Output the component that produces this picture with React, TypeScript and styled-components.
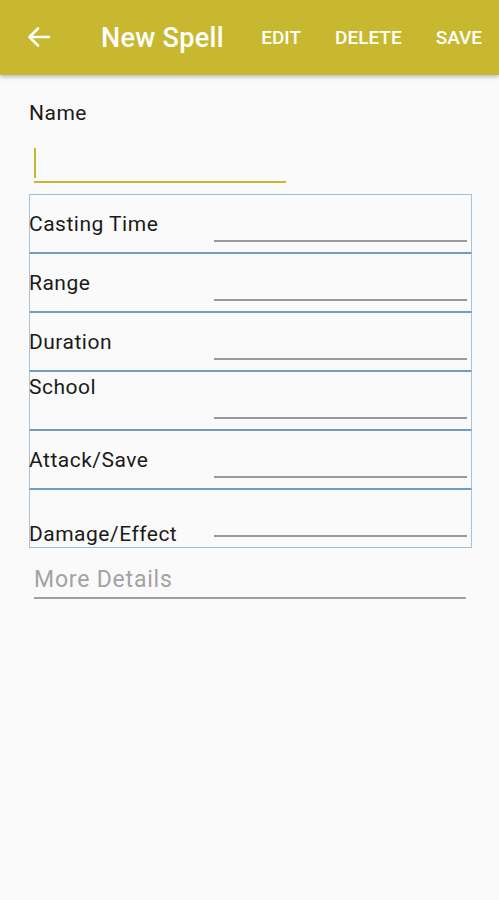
import React from "react";
import styled, { createGlobalStyle } from "styled-components";

const Global = createGlobalStyle`
  html, body { margin: 0; padding: 0; background: #fafafa; }
  body { font-family: Roboto, "Noto Sans", "Liberation Sans", sans-serif; }
  * { box-sizing: border-box; }
`;

const Screen = styled.div`
  width: 499px;
  min-height: 900px;
  background: #fafafa;
`;

const AppBar = styled.header`
  height: 75px;
  background: #c8b82f;
  display: flex;
  align-items: center;
  padding: 0 17px 0 27px;
  box-shadow: 0 2px 4px rgba(0, 0, 0, 0.25);
  color: #fff;
  position: relative;
`;

const BackButton = styled.button`
  border: 0;
  background: transparent;
  padding: 0;
  width: 24px;
  height: 24px;
  display: flex;
  align-items: center;
  justify-content: center;
  color: #fff;
  margin-top: -1px;
`;

const Title = styled.h1`
  margin: 0 0 0 50px;
  font-size: 27px;
  font-weight: 500;
  letter-spacing: 0.3px;
`;

const Actions = styled.nav`
  margin-left: auto;
  display: flex;
  gap: 34px;
`;

const Action = styled.span`
  font-size: 19px;
  font-weight: 500;
  letter-spacing: 0;
`;

const Body = styled.main`
  padding: 0 28px 0 29px;
`;

const NameLabel = styled.div`
  margin-top: 26px;
  font-size: 21px;
  line-height: 24px;
  color: #1c1c1c;
  letter-spacing: 0.5px;
`;

const NameInput = styled.div`
  margin-left: 5px;
  width: 252px;
  height: 58px;
  border-bottom: 2px solid #c8b82f;
  display: flex;
  align-items: flex-end;
  padding-bottom: 3px;
`;

const Caret = styled.span`
  width: 2px;
  height: 30px;
  background: #c8b82f;
`;

const Grid = styled.section`
  margin-top: 11px;
  width: 443px;
  display: flex;
  flex-direction: column;
`;

const Row = styled.div`
  height: 59px;
  display: flex;
  border: 1px solid #a8c5da;
  border-top-color: #6f9dc1;
  border-bottom-color: #6f9dc1;
  &:first-child { border-top-color: #9dbdd4; }
  &:last-child { border-bottom-color: #9dbdd4; }
`;

const RowLabel = styled.div<{ $align: "center" | "flex-start" | "flex-end" }>`
  width: 185px;
  margin-left: -1px;
  align-self: ${(p) => p.$align};
  font-size: 21px;
  line-height: 24px;
  color: #1a1a1a;
  letter-spacing: 0.5px;
  white-space: nowrap;
  padding-top: ${(p) => (p.$align === "flex-start" ? "3px" : "0")};
  padding-bottom: ${(p) => (p.$align === "flex-end" ? "1px" : "0")};
`;

const RowInput = styled.div`
  flex: 1;
  margin-right: 4px;
  margin-bottom: 10px;
  border-bottom: 2px solid #9a9a9a;
`;

const Details = styled.div`
  margin: 18px 5px 0 5px;
  width: 432px;
  padding-bottom: 3px;
  border-bottom: 2px solid #a0a0a0;
  font-size: 23px;
  line-height: 28px;
  color: #a3a3a3;
  letter-spacing: 0.8px;
`;

const rows: { label: string; align: "center" | "flex-start" | "flex-end" }[] = [
  { label: "Casting Time", align: "center" },
  { label: "Range", align: "center" },
  { label: "Duration", align: "center" },
  { label: "School", align: "flex-start" },
  { label: "Attack/Save", align: "center" },
  { label: "Damage/Effect", align: "flex-end" },
];

export default function App() {
  return (
    <Screen>
      <Global />
      <AppBar>
        <BackButton aria-label="Back">
          <svg width="24" height="24" viewBox="0 0 24 24" fill="none" stroke="#fff" strokeWidth="2.6" strokeLinecap="round" strokeLinejoin="round">
            <path d="M22 12H3" />
            <path d="M11 3.5L2.5 12L11 20.5" />
          </svg>
        </BackButton>
        <Title>New Spell</Title>
        <Actions>
          <Action>EDIT</Action>
          <Action>DELETE</Action>
          <Action>SAVE</Action>
        </Actions>
      </AppBar>
      <Body>
        <NameLabel>Name</NameLabel>
        <NameInput>
          <Caret />
        </NameInput>
        <Grid>
          {rows.map((r) => (
            <Row key={r.label}>
              <RowLabel $align={r.align}>{r.label}</RowLabel>
              <RowInput />
            </Row>
          ))}
        </Grid>
        <Details>More Details</Details>
      </Body>
    </Screen>
  );
}
